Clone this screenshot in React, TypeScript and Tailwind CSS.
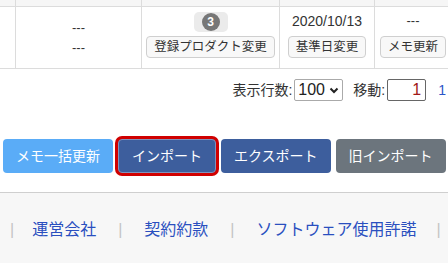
const jp = "font-['Liberation_Sans','Noto_Sans_CJK_JP',sans-serif]";

function SmallButton({ children }: { children: React.ReactNode }) {
  return (
    <button className="h-[22px] whitespace-nowrap rounded-[4px] border border-[#cfcfcf] bg-[#f8f8f8] px-[7px] text-[12.5px] leading-none text-[#333]">
      {children}
    </button>
  );
}

function ActionButton({
  children,
  className,
}: {
  children: React.ReactNode;
  className: string;
}) {
  return (
    <button
      className={`h-[34px] shrink-0 whitespace-nowrap rounded-[4px] px-[13px] text-[14px] leading-none text-white ${className}`}
    >
      {children}
    </button>
  );
}

export default function App() {
  return (
    <div className={`h-[263px] w-[448px] overflow-hidden bg-white ${jp}`}>
      {/* table fragment */}
      <div className="grid w-[451px] grid-cols-[16px_126px_138px_95px_76px] border-b border-[#dcdcdc]">
        <div className="h-[7px] border-b border-r border-[#dcdcdc] bg-[#f6f6f6]" />
        <div className="h-[7px] border-b border-r border-[#dcdcdc] bg-[#f6f6f6]" />
        <div className="h-[7px] border-b border-r border-[#dcdcdc] bg-[#f6f6f6]" />
        <div className="h-[7px] border-b border-r border-[#dcdcdc] bg-[#f6f6f6]" />
        <div className="h-[7px] border-b border-[#dcdcdc] bg-[#f6f6f6]" />

        <div className="h-[61px] border-r border-[#dcdcdc]" />
        <div className="flex h-[61px] flex-col items-center justify-center gap-[6px] border-r border-[#dcdcdc] text-[13px] leading-[14px] text-[#333]">
          <span>---</span>
          <span>---</span>
        </div>
        <div className="flex h-[61px] flex-col items-center gap-[4px] border-r border-[#dcdcdc] pt-[5px]">
          <div className="flex h-[20px] w-[34px] items-center justify-center rounded-[5px] bg-[#ebebeb]">
            <span className="flex h-[18px] w-[18px] items-center justify-center rounded-full bg-[#777] text-[12px] font-bold leading-none text-white">
              3
            </span>
          </div>
          <SmallButton>登録プロダクト変更</SmallButton>
        </div>
        <div className="flex h-[61px] flex-col items-center gap-[5px] border-r border-[#dcdcdc] pt-[4px]">
          <span className="text-[14px] leading-[20px] text-[#333]">2020/10/13</span>
          <SmallButton>基準日変更</SmallButton>
        </div>
        <div className="flex h-[61px] flex-col items-center gap-[5px] pt-[4px]">
          <span className="text-[13px] leading-[20px] text-[#333]">---</span>
          <SmallButton>メモ更新</SmallButton>
        </div>
      </div>

      {/* pager */}
      <div className="mt-[10px] flex items-center justify-end whitespace-nowrap pr-[2px] text-[14px] text-[#333]">
        <span>表示行数:</span>
        <div className="ml-[2px] flex h-[22px] w-[49px] items-center justify-between rounded-[2px] border border-[#aaa] px-[3px] text-[16px] text-[#222]">
          <span>100</span>
          <svg width="10" height="10" viewBox="0 0 10 10">
            <path d="M1.5 3.5 L5 7 L8.5 3.5" fill="none" stroke="#222" strokeWidth="2" />
          </svg>
        </div>
        <span className="ml-[10px]">移動:</span>
        <div className="ml-[2px] flex h-[22px] w-[39px] items-center justify-end rounded-[2px] border border-[#666] pr-[4px] text-[16px] text-[#a01818]">
          1
        </div>
        <span className="ml-[12px] text-[14px] text-[#2b55c8]">1</span>
      </div>

      {/* action buttons */}
      <div className="mt-[38px] flex items-center gap-[5px] pl-[3px]">
        <ActionButton className="bg-[#5aacf7]">メモ一括更新</ActionButton>
        <ActionButton className="border border-[#7f93bd] bg-[#3d5e9d] ring-[3px] ring-[#d00000]">
          インポート
        </ActionButton>
        <ActionButton className="bg-[#3d5e9d]">エクスポート</ActionButton>
        <ActionButton className="bg-[#6c757d]">旧インポート</ActionButton>
      </div>

      {/* footer */}
      <div className="mt-[19px] h-[80px] border-t border-[#cfcfcf] bg-[#f7f7f7]">
        <div className="flex items-center whitespace-nowrap pt-[26px] text-[16px] leading-[22px]">
          <span className="ml-[10px] shrink-0 text-[#c4c4c4]">|</span>
          <a className="ml-[18px] shrink-0 text-[#2a4fbf]">運営会社</a>
          <span className="ml-[22px] shrink-0 text-[#c4c4c4]">|</span>
          <a className="ml-[22px] shrink-0 text-[#2a4fbf]">契約約款</a>
          <span className="ml-[22px] shrink-0 text-[#c4c4c4]">|</span>
          <a className="ml-[22px] shrink-0 text-[#2a4fbf]">ソフトウェア使用許諾</a>
          <span className="ml-[20px] shrink-0 text-[#c4c4c4]">|</span>
        </div>
      </div>
    </div>
  );
}
